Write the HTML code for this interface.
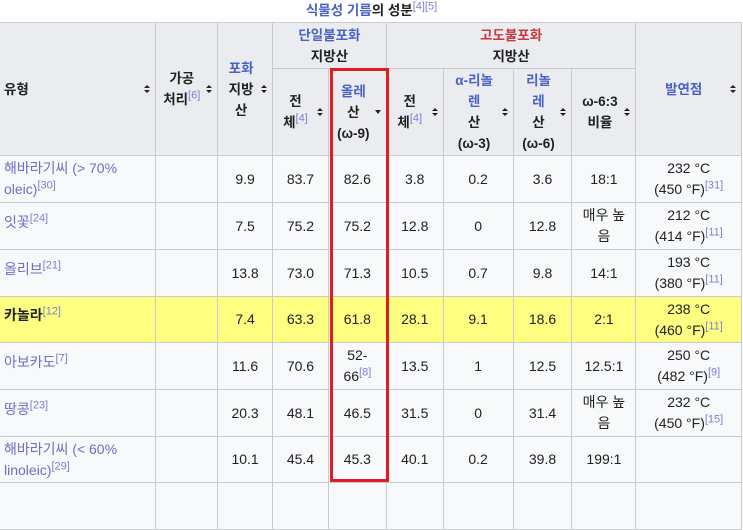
<!DOCTYPE html>
<html><head><meta charset="utf-8"><style>
body{margin:0;background:#fff;width:743px;height:486px;overflow:hidden;font-family:"Liberation Sans","Noto Sans CJK KR",sans-serif;font-size:13px;color:#202122;position:relative}
.cap{position:absolute;top:2px;left:0;width:743px;text-align:center;font-weight:bold;font-size:13.5px;line-height:18px}
.cap a{color:#4a62c8}
a{color:#6b6fc0;text-decoration:none}
th a,.cap a{color:#4a62c8}
a.red{color:#c83a3a}
sup{font-size:11px;line-height:0;color:#7b7fd0;font-weight:normal}
table{position:absolute;left:-1px;top:22px;border-collapse:collapse;table-layout:fixed;line-height:21px}
td,th{border:1px solid #c8ccd1;padding:0 4px;text-align:center;vertical-align:middle;position:relative}
th{background:#eaecf0;font-weight:bold;font-size:13.5px}
td{background:#f8f9fa;font-size:14px}
tr.y td{background:#fefe80}
td.l{text-align:left}
td.u{padding-bottom:8px}
.s{position:absolute;right:5px;top:50%;margin-top:-4px;width:6px;height:8px}
.s:before,.s:after{content:"";position:absolute;left:0;border-left:3px solid transparent;border-right:3px solid transparent}
.s:before{top:0;border-bottom:3.5px solid #222}
.s:after{bottom:0;border-top:3.5px solid #222}
.d{position:absolute;right:5px;top:50%;margin-top:-2px;border-left:3px solid transparent;border-right:3px solid transparent;border-top:4px solid #222}
.box{position:absolute;left:330px;top:68px;width:53px;height:408px;border:3px solid #e01b24}
</style></head><body>
<div class="cap"><a>식물성 기름</a>의 성분<sup>[4][5]</sup></div>
<table>
<colgroup><col style="width:157px"><col style="width:62px"><col style="width:55px"><col style="width:56px"><col style="width:58px"><col style="width:57px"><col style="width:70px"><col style="width:59px"><col style="width:64px"><col style="width:106px"></colgroup>
<tr style="height:46px"><th rowspan="2" style="text-align:left">유형<span class="s"></span></th><th rowspan="2" style="padding-right:14px">가공<br>처리<sup>[6]</sup><span class="s"></span></th><th rowspan="2" style="padding-right:12px"><a>포화</a><br>지방<br>산<span class="s"></span></th><th colspan="2"><a>단일불포화</a><br>지방산</th><th colspan="4"><a class="red">고도불포화</a><br>지방산</th><th rowspan="2" style="padding-right:14px"><a>발연점</a><span class="s"></span></th></tr>
<tr style="height:87px"><th style="padding-right:14px">전<br>체<sup>[4]</sup><span class="s"></span></th><th style="padding-right:12px"><a>올레</a><br>산<br>(ω-9)<span class="d"></span></th><th style="padding-right:14px">전<br>체<sup>[4]</sup><span class="s"></span></th><th style="padding-right:12px"><a>α-리놀</a><br><a>렌</a><br>산<br>(ω-3)<span class="s"></span></th><th style="padding-right:12px"><a>리놀</a><br><a>레</a><br>산<br>(ω-6)<span class="s"></span></th><th style="padding-right:12px">ω-6:3<br>비율<span class="s"></span></th></tr>
<tr style="height:47px"><td class="l"><a>해바라기씨 (&gt; 70%<br>oleic)</a><sup>[30]</sup></td><td></td><td>9.9</td><td>83.7</td><td>82.6</td><td>3.8</td><td>0.2</td><td>3.6</td><td>18:1</td><td>232 °C<br>(450 °F)<sup>[31]</sup></td></tr>
<tr style="height:47px"><td class="l u"><a>잇꽃</a><sup>[24]</sup></td><td></td><td>7.5</td><td>75.2</td><td>75.2</td><td>12.8</td><td>0</td><td>12.8</td><td>매우 높<br>음</td><td>212 °C<br>(414 °F)<sup>[11]</sup></td></tr>
<tr style="height:47px"><td class="l u"><a>올리브</a><sup>[21]</sup></td><td></td><td>13.8</td><td>73.0</td><td>71.3</td><td>10.5</td><td>0.7</td><td>9.8</td><td>14:1</td><td>193 °C<br>(380 °F)<sup>[11]</sup></td></tr>
<tr class="y" style="height:46px"><td class="l u"><b>카놀라</b><sup>[12]</sup></td><td></td><td>7.4</td><td>63.3</td><td>61.8</td><td>28.1</td><td>9.1</td><td>18.6</td><td>2:1</td><td>238 °C<br>(460 °F)<sup>[11]</sup></td></tr>
<tr style="height:47px"><td class="l u"><a>아보카도</a><sup>[7]</sup></td><td></td><td>11.6</td><td>70.6</td><td>52-<br>66<sup>[8]</sup></td><td>13.5</td><td>1</td><td>12.5</td><td>12.5:1</td><td>250 °C<br>(482 °F)<sup>[9]</sup></td></tr>
<tr style="height:47px"><td class="l u"><a>땅콩</a><sup>[23]</sup></td><td></td><td>20.3</td><td>48.1</td><td>46.5</td><td>31.5</td><td>0</td><td>31.4</td><td>매우 높<br>음</td><td>232 °C<br>(450 °F)<sup>[15]</sup></td></tr>
<tr style="height:46px"><td class="l"><a>해바라기씨 (&lt; 60%<br>linoleic)</a><sup>[29]</sup></td><td></td><td>10.1</td><td>45.4</td><td>45.3</td><td>40.1</td><td>0.2</td><td>39.8</td><td>199:1</td><td></td></tr>
<tr style="height:47px"><td></td><td></td><td></td><td></td><td></td><td></td><td></td><td></td><td></td><td></td></tr>
</table>
<div class="box"></div>
</body></html>
